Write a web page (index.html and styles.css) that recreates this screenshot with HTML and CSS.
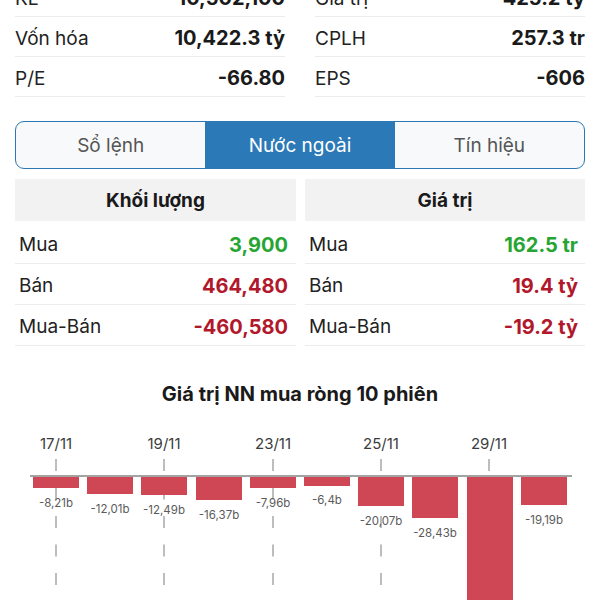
FILE: index.html
```html
<!DOCTYPE html>
<html lang="vi">
<head>
<meta charset="utf-8">
<title>Nước ngoài</title>
<link rel="stylesheet" href="styles.css">
</head>
<body>
<div class="page">
  <div class="stats">
    <div class="stat"><span class="lbl">KL</span><span class="val">10,502,100</span></div>
    <div class="stat"><span class="lbl">Giá trị</span><span class="val">425.2 tỷ</span></div>
    <div class="stat"><span class="lbl">Vốn hóa</span><span class="val">10,422.3 tỷ</span></div>
    <div class="stat"><span class="lbl">CPLH</span><span class="val">257.3 tr</span></div>
    <div class="stat"><span class="lbl">P/E</span><span class="val">-66.80</span></div>
    <div class="stat"><span class="lbl">EPS</span><span class="val">-606</span></div>
  </div>

  <div class="tabs">
    <div class="tab">Sổ lệnh</div>
    <div class="tab active">Nước ngoài</div>
    <div class="tab">Tín hiệu</div>
  </div>

  <div class="flows">
    <div class="flow">
      <div class="head">Khối lượng</div>
      <div class="frow"><span class="lbl">Mua</span><span class="val up">3,900</span></div>
      <div class="frow"><span class="lbl">Bán</span><span class="val down">464,480</span></div>
      <div class="frow"><span class="lbl">Mua-Bán</span><span class="val down">-460,580</span></div>
    </div>
    <div class="flow">
      <div class="head">Giá trị</div>
      <div class="frow"><span class="lbl">Mua</span><span class="val up">162.5 tr</span></div>
      <div class="frow"><span class="lbl">Bán</span><span class="val down">19.4 tỷ</span></div>
      <div class="frow"><span class="lbl">Mua-Bán</span><span class="val down">-19.2 tỷ</span></div>
    </div>
  </div>

  <h2 class="chart-title">Giá trị NN mua ròng 10 phiên</h2>

  <svg class="chart" width="600" height="200" viewBox="0 420 600 200">
    <g class="grid">
      <line x1="56" y1="461" x2="56" y2="620"/>
      <line x1="164" y1="461" x2="164" y2="620"/>
      <line x1="273" y1="461" x2="273" y2="620"/>
      <line x1="381" y1="461" x2="381" y2="620"/>
      <line x1="489" y1="461" x2="489" y2="620"/>
    </g>
    <g class="dates">
      <text x="56" y="451">17/11</text>
      <text x="164" y="451">19/11</text>
      <text x="273" y="451">23/11</text>
      <text x="381" y="451">25/11</text>
      <text x="489" y="451">29/11</text>
    </g>
    <line class="axis" x1="30" y1="478" x2="572" y2="478"/>
    <g class="bars">
      <rect x="33" y="479" width="46" height="11"/>
      <rect x="87" y="479" width="46" height="17"/>
      <rect x="141" y="479" width="46" height="18"/>
      <rect x="196" y="479" width="46" height="23"/>
      <rect x="250" y="479" width="46" height="11"/>
      <rect x="304" y="479" width="46" height="9"/>
      <rect x="358" y="479" width="46" height="29"/>
      <rect x="412" y="479" width="46" height="41"/>
      <rect x="467" y="479" width="46" height="140"/>
      <rect x="521" y="479" width="46" height="28"/>
    </g>
    <g class="vals">
      <text x="56" y="509">-8,21b</text>
      <text x="110" y="515">-12,01b</text>
      <text x="164" y="516">-12,49b</text>
      <text x="219" y="521">-16,37b</text>
      <text x="273" y="509">-7,96b</text>
      <text x="327" y="506">-6,4b</text>
      <text x="381" y="527">-20,07b</text>
      <text x="435" y="539">-28,43b</text>
      <text x="544" y="526">-19,19b</text>
    </g>
  </svg>
</div>
</body>
</html>
```
FILE: styles.css
```css
html, body {
  margin: 0;
  padding: 0;
  background: #ffffff;
}

body {
  font-family: Inter, "Liberation Sans", "Noto Sans", sans-serif;
  color: #1c1c1e;
  width: 600px;
  height: 600px;
  overflow: hidden;
}

.page {
  display: flex;
  flex-direction: column;
}

.stats {
  margin: -23px 15px 0;
  display: grid;
  grid-template-columns: 1fr 1fr;
  column-gap: 30px;
}

.stat {
  border-bottom: 1px solid #ececec;
  display: flex;
  align-items: center;
  justify-content: space-between;
  padding-top: 3px;
  height: 36px;
}

.lbl {
  font-size: 19px;
  color: #222;
}

.val {
  font-size: 20px;
  font-weight: 700;
  color: #1a1a1a;
}

.tabs {
  margin: 24px 15px 0;
  height: 46px;
  display: flex;
  border: 1.5px solid #2b78b4;
  border-radius: 9px;
  overflow: hidden;
  background: #f8f9fa;
}

.tab {
  flex: 1;
  display: flex;
  align-items: center;
  justify-content: center;
  font-size: 19px;
  color: #555;
}

.tab.active {
  background: #2b79b6;
  color: #ffffff;
}

.flows {
  margin: 10px 15px 0;
  display: grid;
  grid-template-columns: 281px 280px;
  column-gap: 9px;
}

.head {
  height: 42px;
  background: #f2f2f2;
  display: flex;
  align-items: center;
  justify-content: center;
  font-size: 19px;
  font-weight: 700;
  color: #1a1a1a;
  margin-bottom: 2px;
}

.frow {
  height: 37px;
  padding: 3px 8px 0 4px;
  border-bottom: 1px solid #ececec;
  display: flex;
  align-items: center;
  justify-content: space-between;
}

.flow + .flow .frow {
  padding-right: 7px;
}

.up { color: #27a533; }
.down { color: #b2182b; }

.chart-title {
  margin: 35px 0 0;
  text-align: center;
  font-size: 20px;
  line-height: 26px;
  font-weight: 700;
  color: #1a1a1a;
}

.chart {
  display: block;
  margin-top: 11px;
}

.grid line {
  stroke: #bdbdbd;
  stroke-width: 2;
  stroke-dasharray: 12 16.5;
}

.dates text {
  font-family: Inter, "Liberation Sans", sans-serif;
  font-size: 15px;
  fill: #3c3c3c;
  text-anchor: middle;
}

.axis {
  stroke: #a3a3a3;
  stroke-width: 2;
}

.bars rect {
  fill: #cf4655;
}

.vals text {
  font-family: Inter, "Liberation Sans", sans-serif;
  font-size: 11.5px;
  fill: #5a5a5a;
  text-anchor: middle;
}
```
